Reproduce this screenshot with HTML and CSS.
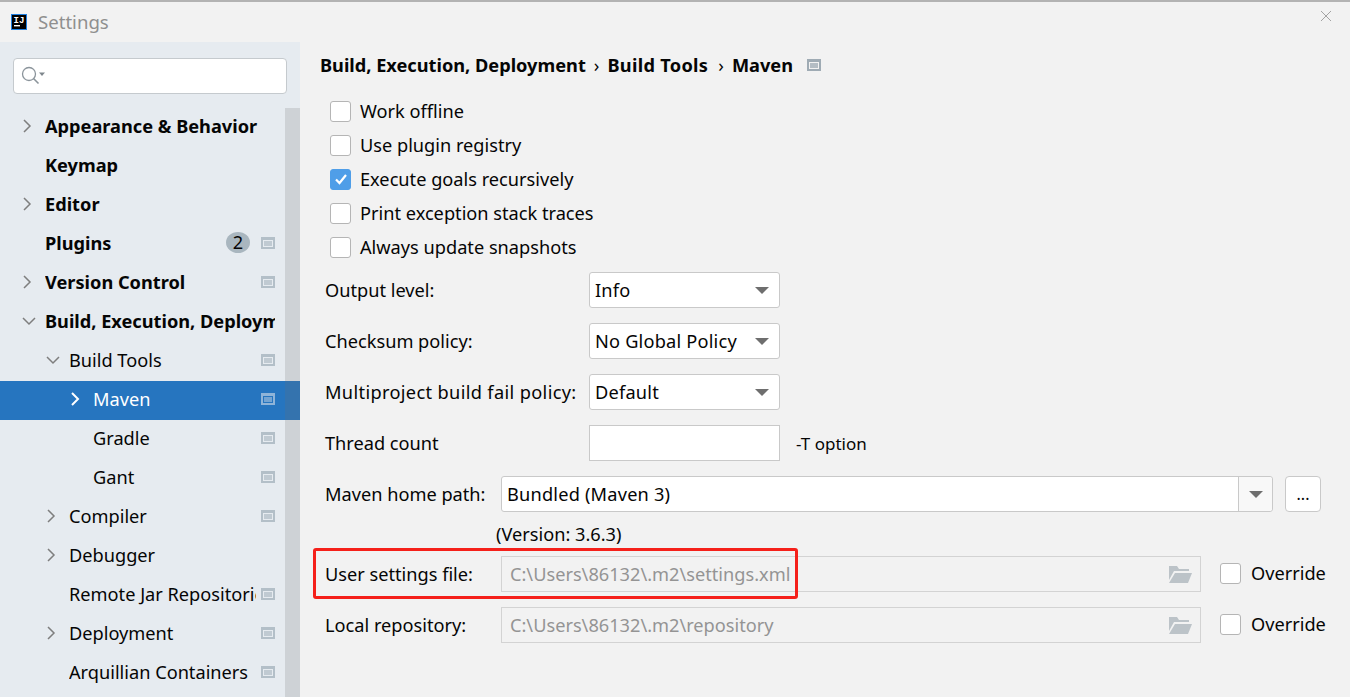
FILE: index.html
```html
<!DOCTYPE html>
<html lang="en">
<head>
<meta charset="utf-8">
<title>Settings</title>
<link rel="stylesheet" href="styles.css">
</head>
<body>
<svg class="defs" width="0" height="0" aria-hidden="true">
  <symbol id="proj" viewBox="0 0 14 12"><path fill="currentColor" fill-rule="evenodd" d="M0 0h14v12H0zM2 3v7h10V3z"/><rect x="3" y="4" width="8" height="5" fill="currentColor" opacity=".75"/></symbol>
  <symbol id="folder" viewBox="0 0 24 18"><path fill="currentColor" d="M1 1h8l2 3h10v2H6L1 15z"/><path fill="currentColor" d="M7 8h17l-4 10H1z"/></symbol>
</svg>
<div class="window">
  <header class="titlebar">
    <svg class="logo" width="16" height="16" viewBox="0 0 16 16"><rect x=".5" y=".5" width="15" height="15" fill="#000" stroke="#1f7fe0"/><text x="2.500" y="9" class="logo-text">IJ</text><rect x="3" y="11" width="6" height="1.4" fill="#fff"/></svg>
    <span class="title">Settings</span>
    <svg class="close" width="10" height="10" viewBox="0 0 10 10"><path d="M0 0l10 10M10 0L0 10" stroke="#a3a3a3" fill="none"/></svg>
  </header>
  <div class="content">
    <aside class="sidebar">
      <div class="search">
        <svg width="26" height="20" viewBox="0 0 26 20"><circle cx="8" cy="8" r="6.5" fill="none" stroke="#8b949b" stroke-width="1.3"/><path d="M12.5 12.5l5 5" stroke="#8b949b" stroke-width="1.6"/><path d="M18 6.500h6l-3 3.500z" fill="#7f878d"/></svg>
      </div>
      <ul class="tree">
        <li class="row l0"><svg class="chev" viewBox="0 0 10 14"><path d="M2 1l6 6-6 6"/></svg><span class="label bold">Appearance &amp; Behavior</span></li>
        <li class="row l0"><span class="nochev"></span><span class="label bold">Keymap</span></li>
        <li class="row l0"><svg class="chev" viewBox="0 0 10 14"><path d="M2 1l6 6-6 6"/></svg><span class="label bold">Editor</span></li>
        <li class="row l0"><span class="nochev"></span><span class="label bold">Plugins</span><span class="badge">2</span><svg class="pi"><use href="#proj"/></svg></li>
        <li class="row l0"><svg class="chev" viewBox="0 0 10 14"><path d="M2 1l6 6-6 6"/></svg><span class="label bold">Version Control</span><svg class="pi"><use href="#proj"/></svg></li>
        <li class="row l0 clipped"><svg class="chev down" viewBox="0 0 14 10"><path d="M1 2l6 6 6-6"/></svg><span class="label bold">Build, Execution, Deployment</span></li>
        <li class="row l1"><svg class="chev down" viewBox="0 0 14 10"><path d="M1 2l6 6 6-6"/></svg><span class="label">Build Tools</span><svg class="pi"><use href="#proj"/></svg></li>
        <li class="row l2 selected"><svg class="chev" viewBox="0 0 10 14"><path d="M2 1l6 6-6 6"/></svg><span class="label">Maven</span><svg class="pi"><use href="#proj"/></svg></li>
        <li class="row l2"><span class="nochev"></span><span class="label">Gradle</span><svg class="pi"><use href="#proj"/></svg></li>
        <li class="row l2"><span class="nochev"></span><span class="label">Gant</span><svg class="pi"><use href="#proj"/></svg></li>
        <li class="row l1"><svg class="chev" viewBox="0 0 10 14"><path d="M2 1l6 6-6 6"/></svg><span class="label">Compiler</span><svg class="pi"><use href="#proj"/></svg></li>
        <li class="row l1"><svg class="chev" viewBox="0 0 10 14"><path d="M2 1l6 6-6 6"/></svg><span class="label">Debugger</span></li>
        <li class="row l1"><span class="nochev"></span><span class="label">Remote Jar Repositories</span><svg class="pi"><use href="#proj"/></svg></li>
        <li class="row l1"><svg class="chev" viewBox="0 0 10 14"><path d="M2 1l6 6-6 6"/></svg><span class="label">Deployment</span><svg class="pi"><use href="#proj"/></svg></li>
        <li class="row l1"><span class="nochev"></span><span class="label">Arquillian Containers</span><svg class="pi"><use href="#proj"/></svg></li>
      </ul>
      <div class="scrollbar"></div>
    </aside>
    <main class="main">
      <div class="crumbs">
        <span>Build, Execution, Deployment</span><span class="sep">›</span><span class="wider">Build Tools</span><span class="sep">›</span><span>Maven</span>
        <svg class="pi crumb-icon"><use href="#proj"/></svg>
      </div>
      <div class="checks">
        <div class="check-row"><span class="box"></span><span>Work offline</span></div>
        <div class="check-row"><span class="box"></span><span>Use plugin registry</span></div>
        <div class="check-row"><span class="box on"><svg width="14" height="12" viewBox="0 0 14 12"><path d="M2 6.500l3.500 3.500L12 2" fill="none" stroke="#fff" stroke-width="2.200"/></svg></span><span>Execute goals recursively</span></div>
        <div class="check-row"><span class="box"></span><span>Print exception stack traces</span></div>
        <div class="check-row"><span class="box"></span><span>Always update snapshots</span></div>
      </div>
      <div class="form">
        <div class="field"><label class="lab wide">Output level:</label><div class="select"><span>Info</span><i class="arrow"></i></div></div>
        <div class="field"><label class="lab wide">Checksum policy:</label><div class="select"><span>No Global Policy</span><i class="arrow"></i></div></div>
        <div class="field"><label class="lab wide spaced">Multiproject build fail policy:</label><div class="select"><span>Default</span><i class="arrow"></i></div></div>
        <div class="field"><label class="lab wide">Thread count</label><div class="textbox"></div><span class="hint">-T option</span></div>
        <div class="field"><label class="lab">Maven home path:</label>
          <div class="combo"><span class="combo-text">Bundled (Maven 3)</span><span class="combo-btn"><i class="arrow"></i></span></div>
          <div class="dots">...</div>
        </div>
        <div class="version">(Version: 3.6.3)</div>
        <div class="field"><label class="lab">User settings file:</label>
          <div class="path"><span>C:\Users\86132\.m2\settings.xml</span><svg class="folder"><use href="#folder"/></svg></div>
          <div class="override"><span class="box"></span><span>Override</span></div>
        </div>
        <div class="field"><label class="lab">Local repository:</label>
          <div class="path"><span>C:\Users\86132\.m2\repository</span><svg class="folder"><use href="#folder"/></svg></div>
          <div class="override"><span class="box"></span><span>Override</span></div>
        </div>
      </div>
      <div class="highlight"></div>
    </main>
  </div>
</div>
</body>
</html>
```
FILE: styles.css
```css
* { box-sizing: border-box; }
html, body { margin: 0; height: 100%; overflow: hidden; }
body {
  font-family: "Noto Sans", "Open Sans", sans-serif;
  font-size: 18.2px;
  color: #050505;
  background: #f2f2f2;
}
.defs { position: absolute; }
.window { height: 697px; display: flex; flex-direction: column; border-top: 2px solid #b3b3b3; }
.titlebar { height: 40px; flex: none; display: flex; align-items: center; padding: 0 19px 0 11px; background: #f2f2f2; }
.logo { flex: none; }
.logo-text { font-family: "Liberation Mono", monospace; font-weight: 700; font-size: 9px; fill: #fff; }
.title { margin: 0 0 2px 11px; color: #8f8f8f; font-size: 18.6px; }
.close { margin-left: auto; margin-top: -12px; }
.content { flex: 1; display: flex; min-height: 0; }

.sidebar { position: relative; width: 300px; flex: none; background: #e6ebf0; overflow: hidden; padding-top: 16px; }
.search { height: 36px; margin: 0 13px; background: #fff; border: 1px solid #c5cace; border-radius: 4px; display: flex; align-items: center; padding-left: 7px; }
.tree { list-style: none; margin: 14px 0 0; padding: 0; }
.row { height: 39px; display: flex; align-items: center; padding: 0 25px 4px 0; }
.l0 { padding-left: 22px; }
.l1 { padding-left: 46px; }
.l2 { padding-left: 70px; }
.chev { width: 10px; height: 14px; margin-right: 13px; flex: none; fill: none; stroke: #7e7e7e; stroke-width: 1.5; }
.chev.down { width: 14px; height: 10px; margin-right: 9px; }
.nochev { width: 23px; flex: none; }
.label { flex: 1; min-width: 0; white-space: nowrap; overflow: hidden; margin-right: 5px; }
.clipped .label { margin-right: 0; }
.bold { font-weight: 700; }
.row .pi { color: #b3bfc8; }
.pi { width: 14px; height: 12px; flex: none; }
.badge { width: 24px; height: 21px; border-radius: 50%; background: #a9b6bf; text-align: center; line-height: 21px; margin-right: 11px; }
.selected { background: #2675bf; color: #fff; }
.selected .chev { stroke: #fff; stroke-width: 2; }
.selected .pi { color: #8fb4d8; }
.scrollbar { position: absolute; right: 0; top: 66px; bottom: 0; width: 15px; background: rgba(110, 110, 110, .2); }

.main { position: relative; flex: 1; min-width: 0; padding-left: 20px; }
.crumbs { height: 46px; margin-bottom: 6px; display: flex; align-items: center; font-weight: 700; }
.sep { margin: 0 8px; font-weight: 400; }
.wider { letter-spacing: .3px; margin-right: 2px; }
.crumb-icon { margin-left: 14px; color: #9fabb4; }
.checks { padding-left: 10px; }
.check-row { height: 34px; display: flex; align-items: center; gap: 9px; }
.box { width: 21px; height: 21px; flex: none; background: #fff; border: 1.5px solid #b5b5b5; border-radius: 3px; display: flex; align-items: center; justify-content: center; }
.box.on { background: #4f9ee8; border-color: #4f9ee8; }
.form { padding: 8px 0 0 5px; display: flex; flex-direction: column; }
.field { height: 36px; margin-bottom: 15px; display: flex; align-items: center; }
.lab { width: 176px; flex: none; }
.lab.wide { width: 264px; }
.spaced { letter-spacing: .35px; }
.select { width: 191px; height: 36px; background: #fff; border: 1.5px solid #c9c9c9; border-radius: 3px; display: flex; align-items: center; justify-content: space-between; padding: 0 10px 0 5px; letter-spacing: .2px; }
.arrow { display: block; width: 0; height: 0; border-left: 7px solid transparent; border-right: 7px solid transparent; border-top: 7px solid #6e6e6e; }
.textbox { width: 191px; height: 36px; background: #fff; border: 1.5px solid #c9c9c9; }
.hint { margin-left: 16px; font-size: 17px; }
.combo { width: 772px; height: 36px; flex: none; background: #fff; border: 1.5px solid #c9c9c9; border-radius: 3px; display: flex; align-items: center; }
.combo-text { flex: 1; padding-left: 5px; letter-spacing: .2px; }
.combo-btn { width: 34px; height: 100%; flex: none; background: #f8f8f8; border-left: 1.5px solid #c9c9c9; display: flex; align-items: center; justify-content: center; border-radius: 0 3px 3px 0; }
.dots { width: 36px; height: 36px; flex: none; margin-left: 12px; background: #fff; border: 1.5px solid #c9c9c9; border-radius: 4px; display: flex; align-items: center; justify-content: center; font-size: 16px; }
.version { height: 44px; margin: -15px 0 0 171px; display: flex; align-items: center; }
.path { width: 700px; height: 36px; flex: none; background: #f2f2f2; border: 1.5px solid #d3d3d3; display: flex; align-items: center; justify-content: space-between; padding: 0 8px 0 8px; color: #949494; }
.folder { width: 24px; height: 18px; color: #bcc3c8; }
.override { margin: 0 0 2px 19px; display: flex; align-items: center; gap: 10px; }
.highlight { position: absolute; left: 13px; top: 506px; width: 485px; height: 51px; border: 3px solid #f5201a; border-radius: 3px; }
```
